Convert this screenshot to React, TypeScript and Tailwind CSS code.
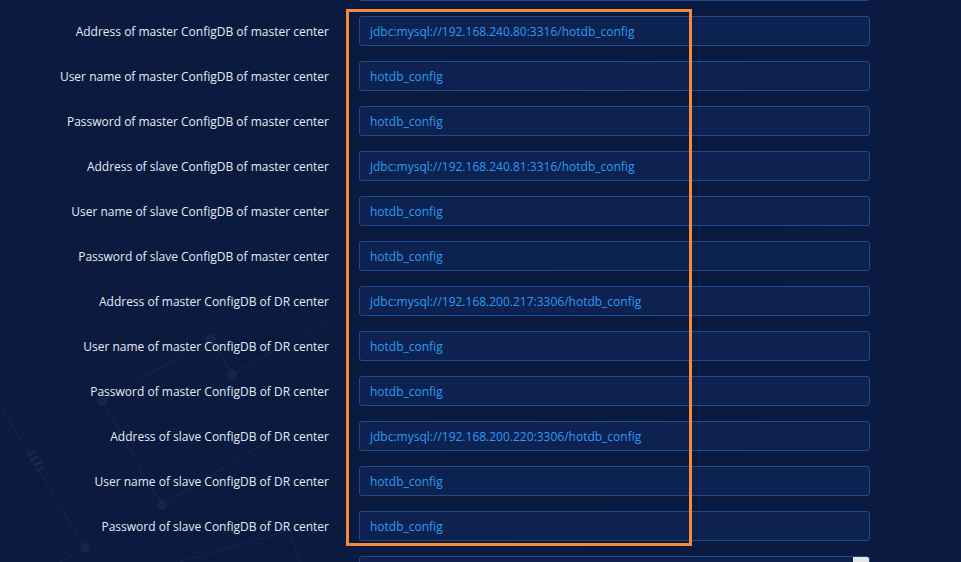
const ROWS: { label: string; value: string }[] = [
  { label: 'Address of master ConfigDB of master center', value: 'jdbc:mysql://192.168.240.80:3316/hotdb_config' },
  { label: 'User name of master ConfigDB of master center', value: 'hotdb_config' },
  { label: 'Password of master ConfigDB of master center', value: 'hotdb_config' },
  { label: 'Address of slave ConfigDB of master center', value: 'jdbc:mysql://192.168.240.81:3316/hotdb_config' },
  { label: 'User name of slave ConfigDB of master center', value: 'hotdb_config' },
  { label: 'Password of slave ConfigDB of master center', value: 'hotdb_config' },
  { label: 'Address of master ConfigDB of DR center', value: 'jdbc:mysql://192.168.200.217:3306/hotdb_config' },
  { label: 'User name of master ConfigDB of DR center', value: 'hotdb_config' },
  { label: 'Password of master ConfigDB of DR center', value: 'hotdb_config' },
  { label: 'Address of slave ConfigDB of DR center', value: 'jdbc:mysql://192.168.200.220:3306/hotdb_config' },
  { label: 'User name of slave ConfigDB of DR center', value: 'hotdb_config' },
  { label: 'Password of slave ConfigDB of DR center', value: 'hotdb_config' },
];

function Circuit() {
  return (
    <svg className="absolute inset-0 pointer-events-none" width="961" height="562" viewBox="0 0 961 562">
      <g stroke="#17264c" strokeWidth="1" fill="none">
        <path d="M0 405 L85 548 L60 562" />
        <path d="M102 401 L162 505 L270 440" />
        <path d="M102 401 L211 339 L232 374 L330 320" />
        <path d="M180 562 L290 530 L300 562" />
      </g>
      <g stroke="#17264c" strokeWidth="3">
        <path d="M27 456 L36 451 M30 461 L39 456 M33 466 L42 461 M36 471 L45 466" />
      </g>
      <g fill="#152549">
        <circle cx="85" cy="548" r="5" />
        <circle cx="102" cy="401" r="5" />
        <circle cx="162" cy="505" r="5" />
        <circle cx="211" cy="339" r="5" />
        <circle cx="232" cy="374" r="5" />
      </g>
    </svg>
  );
}

function Row({ label, value }: { label: string; value: string }) {
  return (
    <div className="flex items-center h-[30px]">
      <label className="w-[329px] shrink-0 pt-[2px] text-right text-[12px] text-[#e4ebf6]">{label}</label>
      <div className="ml-[30px] w-[511px] h-[30px] flex items-center pt-[2px] px-[10px] rounded-[3px] border border-[#1a4c8c] bg-[#0d2251] text-[12px] text-[#2b9cf2]">
        {value}
      </div>
    </div>
  );
}

export default function App() {
  return (
    <div
      className="relative w-[961px] h-[562px] overflow-hidden bg-gradient-to-r from-[#0b1a3e] to-[#0a1a40]"
      style={{ fontFamily: '"Open Sans", "Noto Sans", sans-serif' }}
    >
      <Circuit />
      <div className="relative flex flex-col gap-[15px] -mt-[29px]">
        <div className="flex h-[30px]">
          <div className="ml-[359px] w-[511px] h-[30px] rounded-[3px] border border-[#1a4c8c] bg-[#0d2251]" />
        </div>
        {ROWS.map(row => (
          <Row key={row.label} label={row.label} value={row.value} />
        ))}
        <div className="flex h-[30px]">
          <div className="ml-[359px] w-[511px] h-[30px] rounded-[3px] border border-[#1a4c8c] bg-[#0d2251] flex justify-end">
            <div className="w-[16px] h-[16px] bg-[#e6e6e6] rounded-tr-[2px]" />
          </div>
        </div>
      </div>
      <div className="absolute left-[346px] top-[9px] w-[346px] h-[537px] border-[3px] border-[#f58a3c]" />
    </div>
  );
}
